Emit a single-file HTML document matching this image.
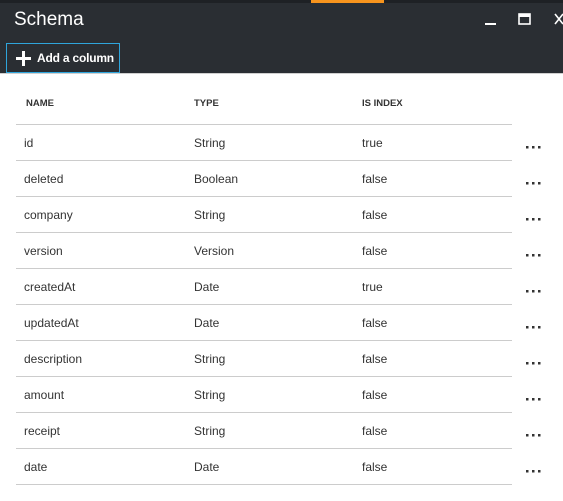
<!DOCTYPE html><html><head><style>
body{margin:0;width:563px;height:501px;overflow:hidden;background:#fff;font-family:"Liberation Sans",sans-serif;position:relative}
.top{position:absolute;left:0;top:0;width:563px;height:3px;background:#1e2125}
.or{position:absolute;left:311px;top:0;width:73px;height:3px;background:#f7941d}
.hd{position:absolute;left:0;top:3px;width:563px;height:70px;background:#2a2e33;border-bottom:1px solid #cfcfcf}
.t{position:absolute;left:14px;top:6px;color:#fff;font-size:19px}
.btn{position:absolute;left:6px;top:40px;width:114px;height:30px;border:1px solid #2fa5dc;box-sizing:border-box;color:#fff;font-size:12px;font-weight:bold;white-space:nowrap}
.btn span{position:absolute;left:30px;top:7px;letter-spacing:-0.2px}
.th{position:absolute;top:98px;font-size:9.5px;font-weight:bold;color:#333}
.ln{position:absolute;left:16px;width:496px;height:1px;background:#cccccc}
.c{position:absolute;font-size:12px;color:#333}
.d{position:absolute;left:526px}
</style></head><body>
<div class="top"></div><div class="or"></div>
<div class="hd">
<div class="t">Schema</div>
<svg style="position:absolute;left:485px;top:10px" width="78" height="14"><rect x="0" y="10" width="11" height="2" fill="#fff"/><rect x="34" y="1" width="11" height="10" fill="none" stroke="#fff" stroke-width="1.6"/><rect x="34" y="1" width="11" height="3" fill="#fff"/><path d="M70 1 L78 11 M78 1 L70 11" stroke="#fff" stroke-width="1.6"/></svg>
<div class="btn"><svg style="position:absolute;left:9px;top:7px" width="15" height="15"><rect x="6" y="0" width="3" height="15" fill="#fff"/><rect x="0" y="6" width="15" height="3" fill="#fff"/></svg><span>Add a column</span></div>
</div>
<div class="th" style="left:26px">NAME</div><div class="th" style="left:194px">TYPE</div><div class="th" style="left:362px">IS INDEX</div>
<div class="ln" style="top:124px"></div>
<div id="rows"></div>
<script>
var r=[["id","String","true"],["deleted","Boolean","false"],["company","String","false"],["version","Version","false"],["createdAt","Date","true"],["updatedAt","Date","false"],["description","String","false"],["amount","String","false"],["receipt","String","false"],["date","Date","false"]];
var h="";r.forEach(function(x,i){var y=124+36*i;h+='<div class="c" style="left:24px;top:'+(y+12)+'px">'+x[0]+'</div><div class="c" style="left:194px;top:'+(y+12)+'px">'+x[1]+'</div><div class="c" style="left:362px;top:'+(y+12)+'px">'+x[2]+'</div><svg class="d" style="top:'+(y+22)+'px" width="16" height="4"><rect x="0" y="0" width="2.5" height="2.5" fill="#333"/><rect x="6" y="0" width="2.5" height="2.5" fill="#333"/><rect x="12" y="0" width="2.5" height="2.5" fill="#333"/></svg><div class="ln" style="top:'+(y+36)+'px"></div>';});
document.getElementById("rows").innerHTML=h;
</script>
</body></html>
